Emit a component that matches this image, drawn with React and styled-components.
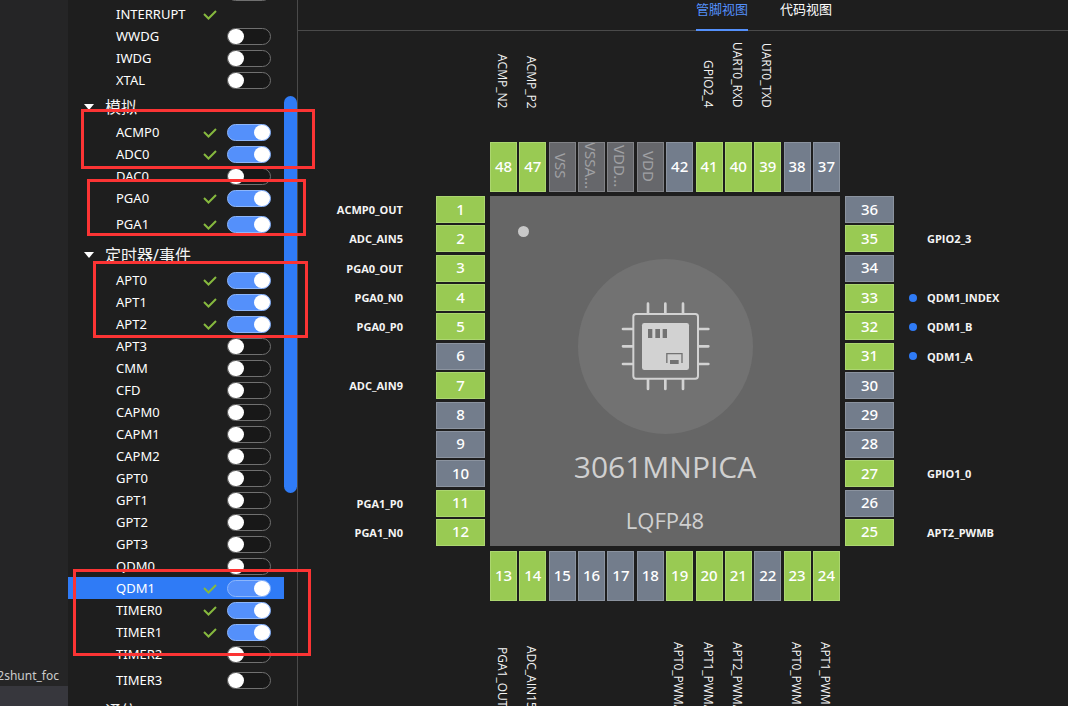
import React, { useState } from "react";
import styled, { createGlobalStyle, css } from "styled-components";

const GlobalStyle = createGlobalStyle`
  *, *::before, *::after { box-sizing: border-box; }
  body {
    margin: 0;
    background: #1e1e1e;
    color: #f4f4f4;
    font-family: "Noto Sans", "Noto Sans CJK SC", sans-serif;
    font-size: 13px;
    overflow: hidden;
  }
  button { font-family: inherit; }
`;

const Page = styled.div`
  position: relative;
  display: flex;
  height: 100vh;
  overflow: hidden;
`;

const Explorer = styled.nav`
  flex: none;
  width: 68px;
  display: flex;
  flex-direction: column;
  justify-content: flex-end;
  background: #252526;
  overflow: hidden;
`;

const FileRow = styled.a`
  flex: none;
  display: flex;
  justify-content: flex-end;
  align-items: center;
  height: ${(p) => (p.$selected ? 20 : 22)}px;
  padding-right: 9px;
  background: ${(p) => (p.$selected ? "#37373d" : "transparent")};
  color: #cccccc;
  font-size: 12px;
  text-decoration: none;
  white-space: nowrap;
`;

const Sidebar = styled.aside`
  flex: none;
  width: 230px;
  display: flex;
  border-right: 1px solid #4a4a4a;
  overflow: hidden;
`;

const ModuleList = styled.div`
  flex: 1;
  margin-top: -19px;
`;

const GroupHeader = styled.button`
  display: flex;
  align-items: center;
  gap: 11px;
  width: 100%;
  height: 30px;
  padding: 1px 0 0 16px;
  border: 0;
  background: none;
  color: #f4f4f4;
  font-size: 16px;
  line-height: 24px;
  text-align: left;
`;

const Caret = styled.span`
  border: 5px solid transparent;
  border-top: 6px solid #ffffff;
  border-bottom: 0;
`;

const ModuleRow = styled.label`
  display: flex;
  align-items: center;
  height: ${(p) => (p.$last ? 30 : 22)}px;
  padding: 0 13px 0 48px;
  background: ${(p) => (p.$selected ? "#2f7bf6" : "transparent")};
  color: #ffffff;
`;

const ModuleName = styled.span`
  flex: 1;
`;

const CheckMark = styled.svg`
  width: 14px;
  height: 12px;
  margin-right: 10px;
`;

const Toggle = styled.input`
  appearance: none;
  flex: none;
  display: flex;
  align-items: center;
  width: 44px;
  height: 17px;
  margin: 0;
  border: 1px solid #707070;
  border-radius: 9px;
  background: #181818;
  visibility: ${(p) => (p.$hidden ? "hidden" : "visible")};

  &::before {
    content: "";
    width: 16px;
    height: 15px;
    border-radius: 8px;
    background: #ffffff;
  }

  &:checked {
    justify-content: flex-end;
    border-color: #8db6fb;
    background: #5490fb;
  }
`;

const ScrollTrack = styled.div`
  width: 13px;
  padding-top: 96px;
`;

const ScrollThumb = styled.div`
  height: 397px;
  border-radius: 7px;
  background: #2f7bf6;
`;

const Main = styled.main`
  flex: 1;
  min-width: 0;
  display: flex;
  flex-direction: column;
`;

const Tabs = styled.div`
  flex: none;
  display: flex;
  gap: 32px;
  height: 31px;
  padding-left: 398px;
  border-bottom: 1px solid #4a4a4a;
`;

const Tab = styled.button`
  flex: none;
  height: 31px;
  padding: 0 0 10px;
  border: 0;
  border-bottom: 2px solid ${(p) => (p.$active ? "#5490fb" : "transparent")};
  background: none;
  color: ${(p) => (p.$active ? "#5490fb" : "#ffffff")};
  font-size: 13px;
  line-height: 17px;
`;

const Stage = styled.section`
  flex: 1;
  min-height: 0;
  display: grid;
  grid-template-columns: 133px 49px 350px 49px 1fr;
  grid-template-rows: 111px 54px 350px 55px 1fr;
  column-gap: 5px;
`;

const placement = {
  top: css`grid-area: 2 / 3; height: 50px;`,
  bottom: css`grid-area: 4 / 3; height: 50px; align-self: end;`,
  left: css`grid-area: 3 / 2; flex-direction: column;`,
  right: css`grid-area: 3 / 4; flex-direction: column;`,
};

const PinStrip = styled.div`
  display: flex;
  justify-content: space-between;
  ${(p) => placement[p.$side]}
`;

const pinColors = {
  used: css`background: #99ca53; border-color: #acd670; color: #ffffff;`,
  free: css`background: #737d8c; border-color: #8b939f; color: #ffffff;`,
  power: css`background: #66676b; border-color: #818286; color: #a0a1a4;`,
};

const Pin = styled.button`
  display: flex;
  align-items: center;
  justify-content: center;
  width: ${(p) => (p.$upright ? "27px" : "100%")};
  height: ${(p) => (p.$upright ? "100%" : "27px")};
  padding: 0 0 2px;
  border: 1px solid;
  font-size: 15px;
  font-weight: 500;
  line-height: 20px;
  overflow: hidden;
  ${(p) => pinColors[p.$kind]}
`;

const PowerName = styled.span`
  writing-mode: vertical-rl;
  padding-right: 2px;
  font-size: 15px;
  font-weight: 400;
  line-height: 20px;
`;

const labelPlacement = {
  top: css`grid-area: 1 / 3; align-items: flex-end; padding-bottom: 34px;`,
  bottom: css`grid-area: 5 / 3; align-items: center; height: 111px; padding-top: 41px;`,
  left: css`grid-area: 3 / 1; flex-direction: column; padding-right: 28px;`,
  right: css`grid-area: 3 / 5; flex-direction: column; padding-left: 10px;`,
};

const LabelStrip = styled.div`
  display: flex;
  justify-content: space-between;
  min-height: 0;
  font-family: "Open Sans", sans-serif;
  font-size: 12px;
  font-weight: 500;
  ${(p) => labelPlacement[p.$side]}
`;

const SideLabel = styled.span`
  display: flex;
  align-items: center;
  justify-content: ${(p) => (p.$end ? "flex-end" : "flex-start")};
  gap: 10px;
  height: 27px;
  font-size: 11px;
  font-weight: 700;
  white-space: nowrap;
`;

const SignalDot = styled.i`
  width: 8px;
  height: 8px;
  border-radius: 50%;
  background: ${(p) => (p.$on ? "#2f7bf6" : "transparent")};
`;

const UprightLabel = styled.span`
  width: 27px;
  padding-right: 3px;
  writing-mode: vertical-rl;
  line-height: 24px;
  white-space: nowrap;
`;

const ChipBody = styled.div`
  grid-area: 3 / 3;
  display: flex;
  flex-direction: column;
  align-items: center;
  padding-top: 30px;
  background: #666666;
  color: #d0d0d0;
`;

const PinOneMark = styled.i`
  align-self: flex-start;
  width: 11px;
  height: 11px;
  margin: 0 0 22px 28px;
  border-radius: 50%;
  background: #c8c8c8;
`;

const ChipDrawing = styled.svg`
  width: 175px;
  height: 175px;
`;

const ChipName = styled.h1`
  margin: 13px 0 0;
  font-family: "Open Sans", sans-serif;
  font-size: 30px;
  line-height: 40px;
  font-weight: 500;
`;

const PackageName = styled.p`
  margin: 17px 0 0;
  font-family: "Open Sans", sans-serif;
  font-size: 22px;
  font-weight: 500;
  line-height: 32px;
`;

const Highlight = styled.div`
  position: absolute;
  left: ${(p) => p.$x}px;
  top: ${(p) => p.$y}px;
  width: ${(p) => p.$w}px;
  height: ${(p) => p.$h}px;
  border: 3px solid #fb3434;
  pointer-events: none;
`;

const groups = [
  {
    items: [
      { name: "", on: false },
      { name: "INTERRUPT", ok: true, noToggle: true },
      { name: "WWDG" },
      { name: "IWDG" },
      { name: "XTAL" },
    ],
  },
  {
    title: "模拟",
    items: [
      { name: "ACMP0", ok: true, on: true },
      { name: "ADC0", ok: true, on: true },
      { name: "DAC0" },
      { name: "PGA0", ok: true, on: true },
      { name: "PGA1", ok: true, on: true, last: true },
    ],
  },
  {
    title: "定时器/事件",
    items: [
      { name: "APT0", ok: true, on: true },
      { name: "APT1", ok: true, on: true },
      { name: "APT2", ok: true, on: true },
      { name: "APT3" },
      { name: "CMM" },
      { name: "CFD" },
      { name: "CAPM0" },
      { name: "CAPM1" },
      { name: "CAPM2" },
      { name: "GPT0" },
      { name: "GPT1" },
      { name: "GPT2" },
      { name: "GPT3" },
      { name: "QDM0" },
      { name: "QDM1", ok: true, on: true, selected: true },
      { name: "TIMER0", ok: true, on: true },
      { name: "TIMER1", ok: true, on: true },
      { name: "TIMER2" },
      { name: "TIMER3", last: true },
    ],
  },
  { title: "通信", items: [] },
];

const pins = {
  top: [
    { n: 48, label: "ACMP_N2" },
    { n: 47, label: "ACMP_P2" },
    { n: 46, power: "VSS" },
    { n: 45, power: "VSSA..." },
    { n: 44, power: "VDD..." },
    { n: 43, power: "VDD" },
    { n: 42 },
    { n: 41, label: "GPIO2_4" },
    { n: 40, label: "UART0_RXD" },
    { n: 39, label: "UART0_TXD" },
    { n: 38 },
    { n: 37 },
  ],
  left: [
    { n: 1, label: "ACMP0_OUT" },
    { n: 2, label: "ADC_AIN5" },
    { n: 3, label: "PGA0_OUT" },
    { n: 4, label: "PGA0_N0" },
    { n: 5, label: "PGA0_P0" },
    { n: 6 },
    { n: 7, label: "ADC_AIN9" },
    { n: 8 },
    { n: 9 },
    { n: 10 },
    { n: 11, label: "PGA1_P0" },
    { n: 12, label: "PGA1_N0" },
  ],
  right: [
    { n: 36 },
    { n: 35, label: "GPIO2_3" },
    { n: 34 },
    { n: 33, label: "QDM1_INDEX", dot: true },
    { n: 32, label: "QDM1_B", dot: true },
    { n: 31, label: "QDM1_A", dot: true },
    { n: 30 },
    { n: 29 },
    { n: 28 },
    { n: 27, label: "GPIO1_0" },
    { n: 26 },
    { n: 25, label: "APT2_PWMB" },
  ],
  bottom: [
    { n: 13, label: "PGA1_OUT" },
    { n: 14, label: "ADC_AIN15" },
    { n: 15 },
    { n: 16 },
    { n: 17 },
    { n: 18 },
    { n: 19, label: "APT0_PWMA" },
    { n: 20, label: "APT1_PWMA" },
    { n: 21, label: "APT2_PWMA" },
    { n: 22 },
    { n: 23, label: "APT0_PWMB" },
    { n: 24, label: "APT1_PWMB" },
  ],
};

function Module({ item }) {
  const [on, setOn] = useState(!!item.on);
  return (
    <ModuleRow $last={item.last} $selected={item.selected}>
      <ModuleName>{item.name}</ModuleName>
      {item.ok && (
        <CheckMark viewBox="0 0 14 12" aria-hidden="true">
          <path d="M1 6 L5.500 10.500 L13 3" fill="none" stroke="#86b93e" strokeWidth="2" />
        </CheckMark>
      )}
      <Toggle
        type="checkbox"
        role="switch"
        checked={on}
        $hidden={item.noToggle}
        onChange={(e) => setOn(e.target.checked)}
      />
    </ModuleRow>
  );
}

function Pins({ side }) {
  const upright = side === "top" || side === "bottom";
  return (
    <PinStrip $side={side}>
      {pins[side].map((p) => (
        <Pin key={p.n} $upright={upright} $kind={p.power ? "power" : p.label ? "used" : "free"}>
          {p.power ? <PowerName>{p.power}</PowerName> : p.n}
        </Pin>
      ))}
    </PinStrip>
  );
}

function Labels({ side }) {
  const upright = side === "top" || side === "bottom";
  return (
    <LabelStrip $side={side}>
      {pins[side].map((p) =>
        upright ? (
          <UprightLabel key={p.n}>{p.label}</UprightLabel>
        ) : (
          <SideLabel key={p.n} $end={side === "left"}>
            {side === "right" && <SignalDot $on={p.dot} />}
            {p.label}
          </SideLabel>
        )
      )}
    </LabelStrip>
  );
}

function ChipIcon() {
  const offsets = [0, 52, 105];
  return (
    <ChipDrawing viewBox="24 27 525 525" aria-hidden="true">
      <circle cx="286.5" cy="289.5" r="262.5" fill="#727272" />
      <g stroke="#d2d2d2" strokeWidth="8" strokeLinecap="round" fill="none">
        <rect x="190" y="192" width="194" height="194" rx="8" strokeWidth="6" />
        {offsets.map((o) => (
          <path
            key={o}
            d={`M${234 + o} 161V190M${234 + o} 388V417M159 ${237 + o}H188M386 ${237 + o}H415`}
          />
        ))}
      </g>
      <rect x="216" y="219" width="141" height="141" rx="7" fill="#d2d2d2" />
      <path d="M234 237h13v27h-13zM256 237h14v27h-14zM278 237h13v27h-13zM300 330h26v12h-26z" fill="#727272" />
      <path d="M290.500 339V311H336V339" fill="none" stroke="#727272" strokeWidth="4" />
    </ChipDrawing>
  );
}

export default function App() {
  return (
    <Page>
      <GlobalStyle />
      <Explorer>
        <FileRow href="#file">2shunt_foc</FileRow>
        <FileRow href="#selected" $selected aria-label="selected" />
      </Explorer>
      <Sidebar>
        <ModuleList>
          {groups.map((g, i) => (
            <React.Fragment key={i}>
              {g.title && (
                <GroupHeader>
                  <Caret />
                  {g.title}
                </GroupHeader>
              )}
              {g.items.map((item, k) => (
                <Module key={k} item={item} />
              ))}
            </React.Fragment>
          ))}
        </ModuleList>
        <ScrollTrack>
          <ScrollThumb />
        </ScrollTrack>
      </Sidebar>
      <Main>
        <Tabs>
          <Tab $active>管脚视图</Tab>
          <Tab>代码视图</Tab>
        </Tabs>
        <Stage>
          <Labels side="top" />
          <Pins side="top" />
          <Labels side="left" />
          <Pins side="left" />
          <ChipBody>
            <PinOneMark />
            <ChipIcon />
            <ChipName>3061MNPICA</ChipName>
            <PackageName>LQFP48</PackageName>
          </ChipBody>
          <Pins side="right" />
          <Labels side="right" />
          <Pins side="bottom" />
          <Labels side="bottom" />
        </Stage>
      </Main>
      <Highlight $x={81} $y={109} $w={234} $h={60} />
      <Highlight $x={87} $y={179} $w={219} $h={57} />
      <Highlight $x={93} $y={261} $w={215} $h={77} />
      <Highlight $x={73} $y={569} $w={238} $h={87} />
    </Page>
  );
}
